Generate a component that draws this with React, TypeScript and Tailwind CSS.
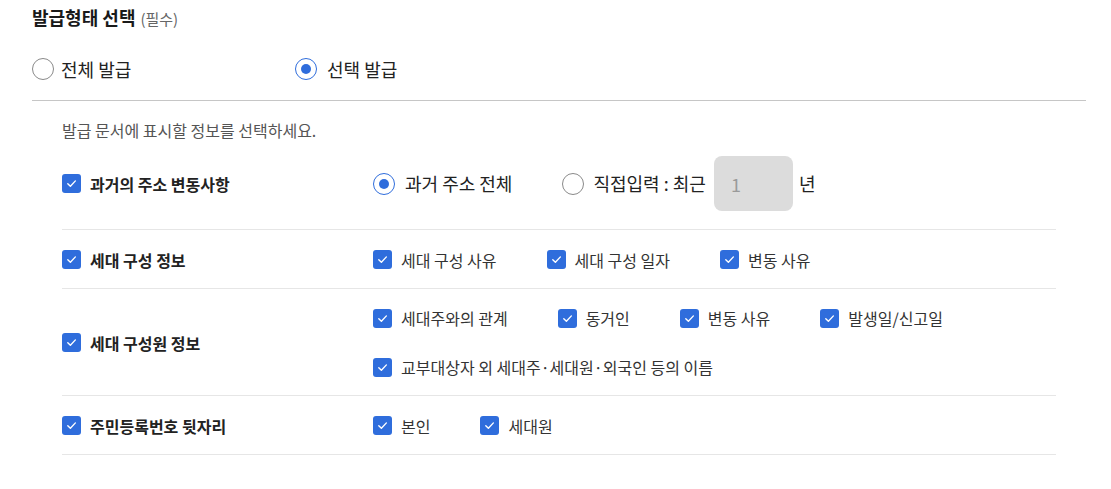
import { useState } from 'react';

const font = { fontFamily: '"Noto Sans CJK KR", "Noto Sans", sans-serif' };

function Check({ checked = true }: { checked?: boolean }) {
  return (
    <span
      className={
        'flex h-[19px] w-[19px] shrink-0 items-center justify-center rounded-[3px] ' +
        (checked ? 'bg-[#2f6ddc]' : 'border border-[#999] bg-white')
      }
    >
      {checked && (
        <svg width="13" height="13" viewBox="0 0 14 14" fill="none">
          <path d="M3 7.2l2.8 2.8L11.2 4.2" stroke="#fff" strokeWidth="1.5" strokeLinecap="round" strokeLinejoin="round" />
        </svg>
      )}
    </span>
  );
}

function Radio({ checked }: { checked: boolean }) {
  return (
    <span
      className={
        'flex h-[22px] w-[22px] shrink-0 items-center justify-center rounded-full border bg-white ' +
        (checked ? 'border-[#2f6ddc]' : 'border-[#8a8a8a]')
      }
    >
      {checked && <span className="h-[10px] w-[10px] rounded-full bg-[#2f6ddc]" />}
    </span>
  );
}

function Option({ label }: { label: string }) {
  return (
    <label className="flex h-[18px] items-center gap-[9px] text-[16px] leading-[18px] text-[#333]">
      <Check />
      <span>{label}</span>
    </label>
  );
}

function Row({ label, children }: { label: string; children: React.ReactNode }) {
  return (
    <div className="flex items-center border-b border-[#e6e6e6] pb-[19px] pt-5">
      <div className="flex w-[311px] shrink-0 items-center gap-[9px]">
        <Check />
        <span className="text-[16px] font-bold leading-[18px] text-[#222]">{label}</span>
      </div>
      <div className="flex flex-1 flex-wrap gap-x-[50px] gap-y-[31px]">{children}</div>
    </div>
  );
}

export default function App() {
  const [mode, setMode] = useState<'all' | 'select'>('select');
  const [pastAll, setPastAll] = useState(true);

  return (
    <div className="min-h-screen w-full bg-white pl-[32px] pr-[25px] pt-[5px]" style={font}>
      {/* 발급형태 */}
      <h2 className="flex items-baseline text-[18px] font-bold leading-[24px] text-[#1a1a1a]">
        발급형태 선택
        <span className="ml-[5px] text-[15px] font-normal text-[#666]">(필수)</span>
      </h2>

      <div className="mt-[26px] flex h-[24px] items-center">
        <button className="flex w-[263px] items-center gap-[7px]" onClick={() => setMode('all')}>
          <Radio checked={mode === 'all'} />
          <span className="text-[18px] text-[#222]">전체 발급</span>
        </button>
        <button className="flex items-center gap-[10px]" onClick={() => setMode('select')}>
          <Radio checked={mode === 'select'} />
          <span className="text-[18px] text-[#222]">선택 발급</span>
        </button>
      </div>

      <div className="mt-[19px] h-px w-full bg-[#c6c6c6]" />

      {/* 선택 항목 */}
      <div className="px-[30px]">
        <p className="pt-[19px] text-[16px] leading-[20px] text-[#555]">발급 문서에 표시할 정보를 선택하세요.</p>

        <div className="flex items-center border-b border-[#e6e6e6] pb-[18px] pt-4">
          <div className="flex w-[311px] shrink-0 items-center gap-[9px]">
            <Check />
            <span className="text-[16px] font-bold leading-[18px] text-[#222]">과거의 주소 변동사항</span>
          </div>
          <div className="flex items-center">
            <button className="flex items-center gap-[10px]" onClick={() => setPastAll(true)}>
              <Radio checked={pastAll} />
              <span className="text-[18px] text-[#222]">과거 주소 전체</span>
            </button>
            <button className="ml-[50px] flex items-center gap-[9px]" onClick={() => setPastAll(false)}>
              <Radio checked={!pastAll} />
              <span className="text-[18px] text-[#222]">직접입력 : 최근</span>
            </button>
            <input
              className="ml-[8px] h-[55px] w-[79px] rounded-[8px] bg-[#dcdcdc] px-[17px] text-[18px] text-[#9a9a9a] outline-none"
              defaultValue="1"
              disabled={pastAll}
            />
            <span className="ml-[6px] text-[18px] text-[#222]">년</span>
          </div>
        </div>

        <Row label="세대 구성 정보">
          <Option label="세대 구성 사유" />
          <Option label="세대 구성 일자" />
          <Option label="변동 사유" />
        </Row>

        <Row label="세대 구성원 정보">
          <Option label="세대주와의 관계" />
          <Option label="동거인" />
          <Option label="변동 사유" />
          <Option label="발생일/신고일" />
          <Option label="교부대상자 외 세대주·세대원·외국인 등의 이름" />
        </Row>

        <Row label="주민등록번호 뒷자리">
          <Option label="본인" />
          <Option label="세대원" />
        </Row>
      </div>
    </div>
  );
}
